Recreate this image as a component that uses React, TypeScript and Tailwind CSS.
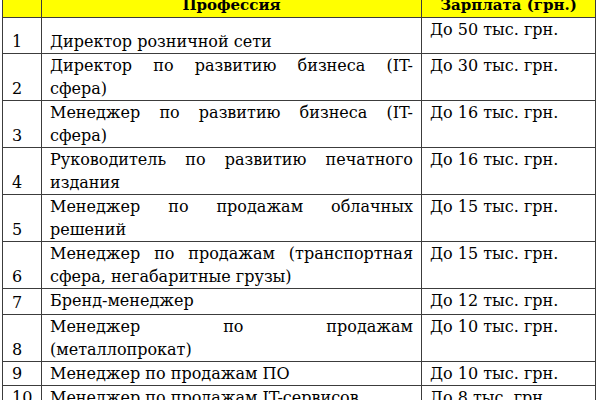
import React from "react";

type Row = {
  n: string;
  lines: string[];
  sal: string;
  h: string;
  bottomText?: boolean;
};

const rows: Row[] = [
  { n: "1", lines: ["Директор розничной сети"], sal: "До 50 тыс. грн.", h: "h-[36px]", bottomText: true },
  { n: "2", lines: ["Директор по развитию бизнеса (IT-", "сфера)"], sal: "До 30 тыс. грн.", h: "h-[46px]" },
  { n: "3", lines: ["Менеджер по развитию бизнеса (IT-", "сфера)"], sal: "До 16 тыс. грн.", h: "h-[46px]" },
  { n: "4", lines: ["Руководитель по развитию печатного", "издания"], sal: "До 16 тыс. грн.", h: "h-[47px]" },
  { n: "5", lines: ["Менеджер по продажам облачных", "решений"], sal: "До 15 тыс. грн.", h: "h-[45px]" },
  { n: "6", lines: ["Менеджер по продажам (транспортная", "сфера, негабаритные грузы)"], sal: "До 15 тыс. грн.", h: "h-[47px]" },
  { n: "7", lines: ["Бренд-менеджер"], sal: "До 12 тыс. грн.", h: "h-[26px]" },
  { n: "8", lines: ["Менеджер по продажам", "(металлопрокат)"], sal: "До 10 тыс. грн.", h: "h-[46px]" },
  { n: "9", lines: ["Менеджер по продажам ПО"], sal: "До 10 тыс. грн.", h: "h-[24px]" },
  { n: "10", lines: ["Менеджер по продажам IT-сервисов"], sal: "До 8 тыс. грн.", h: "h-[24px]" },
];

export default function App() {
  return (
    <div
      className="w-[600px] h-[400px] overflow-hidden bg-white text-black"
      style={{ fontFamily: '"DejaVu Serif", "Liberation Serif", serif' }}
    >
      <div className="ml-[2px] mt-[-7px]">
        <table className="border-collapse table-fixed w-[593px] text-[16px] leading-[23px]">
          <colgroup>
            <col className="w-[39px]" />
            <col className="w-[380px]" />
            <col className="w-[174px]" />
          </colgroup>
          <thead>
            <tr className="h-[24px] bg-[#ffff00]">
              <th className="border border-[#3c3c3c] p-0"></th>
              <th className="border border-[#3c3c3c] p-0 text-center align-bottom font-bold text-[15px]">Профессия</th>
              <th className="border border-[#3c3c3c] p-0 text-center align-bottom font-bold text-[15px]">Зарплата (грн.)</th>
            </tr>
          </thead>
          <tbody>
            {rows.map((r) => (
              <tr key={r.n} className={r.h}>
                <td className="border border-[#3c3c3c] pl-[9px] p-0 align-bottom">{r.n}</td>
                <td
                  className={
                    "border border-[#3c3c3c] pl-[8px] pr-[8px] p-0 " +
                    (r.bottomText ? "align-bottom" : "align-top")
                  }
                >
                  {r.lines.length > 1 ? (
                    <>
                      <div className="text-justify [text-align-last:justify]">{r.lines[0]}</div>
                      <div>{r.lines[1]}</div>
                    </>
                  ) : (
                    <div>{r.lines[0]}</div>
                  )}
                </td>
                <td className="border border-[#3c3c3c] pl-[8px] p-0 align-top">{r.sal}</td>
              </tr>
            ))}
          </tbody>
        </table>
      </div>
    </div>
  );
}
